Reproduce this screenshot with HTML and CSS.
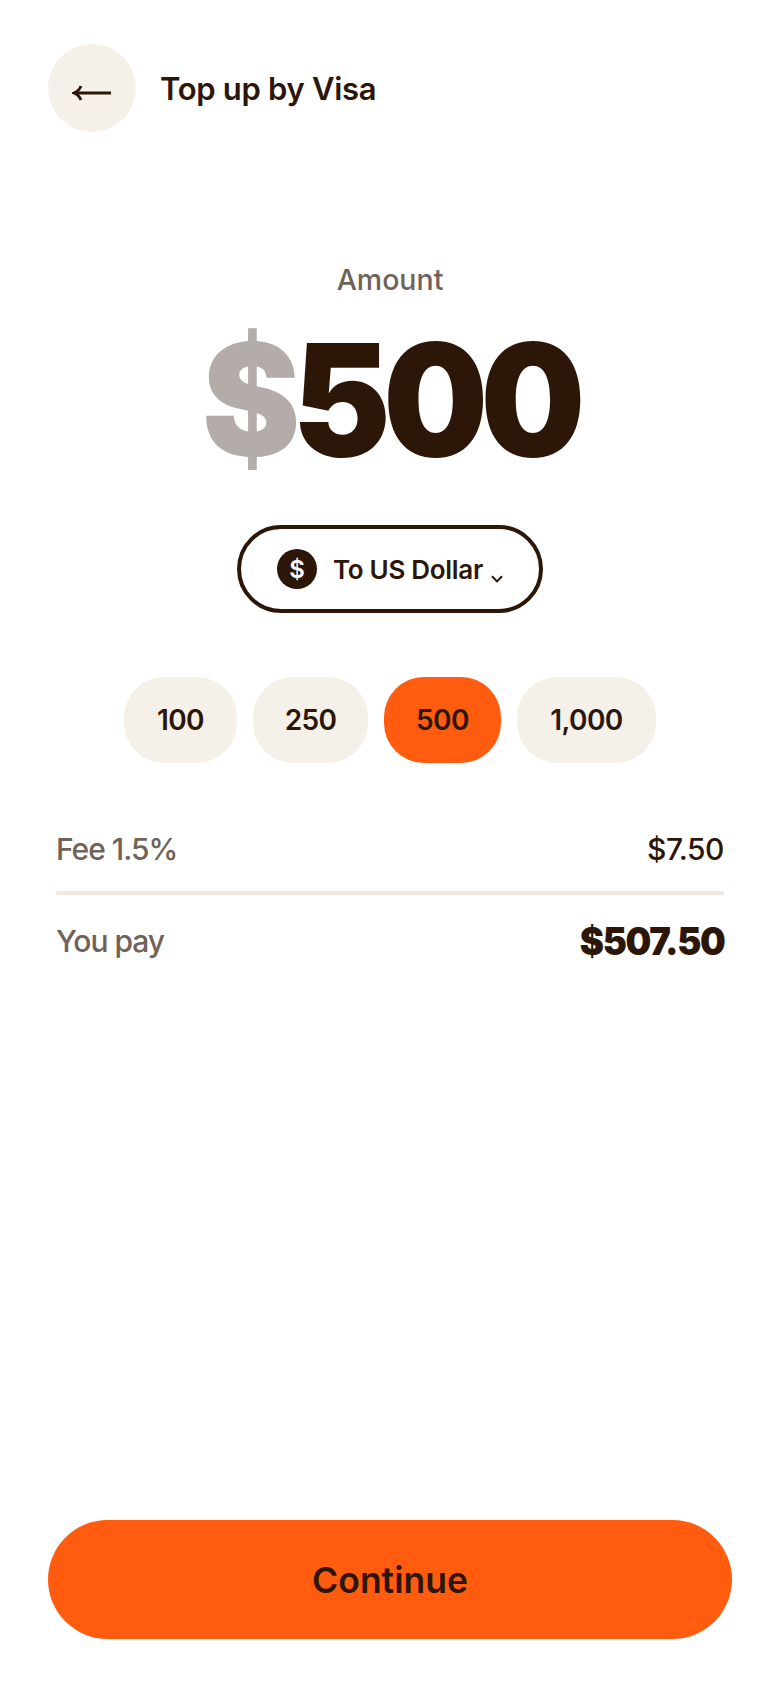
FILE: index.html
```html
<!DOCTYPE html>
<html>
    <head>
        <meta charset="utf-8">
        <title>Top up by Visa</title>
        <link rel="stylesheet" href="styles.css">
    </head>
    <body>
        <div class="screen">
            <div class="top-bar">
                <span class="back">
                    <svg width="40" height="18" viewBox="0 0 40 18" fill="none" stroke="#2c1608" stroke-width="2.8">
                        <path d="M2 9H39"/>
                        <path d="M9 2Q7 7 2 9Q7 11 9 16"/>
                    </svg>
                </span>
                <h1 class="title">Top up by Visa</h1>
            </div>

            <div class="amount">
                <div class="amount-label">Amount</div>
                <div class="amount-value"><span class="currency">$</span>500</div>
                <div class="currency-select">
                    <span class="coin">$</span>
                    <span class="currency-name">To US Dollar</span>
                    <svg class="caret" width="12" height="8" viewBox="0 0 12 8" fill="none" stroke="#2c1608" stroke-width="2">
                        <path d="M1 1.2L6 6.4L11 1.2"/>
                    </svg>
                </div>
            </div>

            <div class="chips">
                <span class="chip">100</span>
                <span class="chip">250</span>
                <span class="chip active">500</span>
                <span class="chip">1,000</span>
            </div>

            <div class="summary">
                <div class="row row-fee">
                    <span class="row-label">Fee 1.5%</span>
                    <span class="row-value">$7.50</span>
                </div>
                <div class="row">
                    <span class="row-label">You pay</span>
                    <span class="row-total">$507.50</span>
                </div>
            </div>

            <div class="continue">Continue</div>
        </div>
    </body>
</html>
```

FILE: styles.css
```css
*{
    box-sizing: border-box;
}
body{
    margin: 0;
    background: #fff;
    color: #2c1608;
    font-family: Inter, "Liberation Sans", sans-serif;
}
.screen{
    height: 1688px;
    padding: 44px 48px 49px;
    display: flex;
    flex-direction: column;
}

.top-bar{
    display: flex;
    align-items: center;
    gap: 24px;
}
.back{
    width: 88px;
    height: 88px;
    padding-top: 10px;
    border-radius: 50%;
    background: #f5f1e9;
    display: flex;
    align-items: center;
    justify-content: center;
}
.title{
    margin: 0;
    font-size: 31px;
    font-weight: 600;
    letter-spacing: -0.3px;
}

.amount{
    margin-top: 130px;
    display: flex;
    flex-direction: column;
    align-items: center;
}
.amount-label{
    font-size: 28.5px;
    line-height: 36px;
    font-weight: 500;
    color: #6f6259;
}
.amount-value{
    margin-top: 14px;
    font-size: 156px;
    line-height: 176px;
    font-weight: 900;
    letter-spacing: -8px;
    transform: scaleX(0.945);
}
.currency{
    color: #b3aca8;
}
.currency-select{
    margin-top: 37px;
    width: 306px;
    height: 88px;
    border: 4px solid #2c1608;
    border-radius: 44px;
    display: flex;
    align-items: center;
    justify-content: center;
    gap: 16px;
}
.coin{
    width: 40px;
    height: 40px;
    border-radius: 50%;
    background: #2c1608;
    color: #fff;
    font-size: 24px;
    font-weight: 600;
    display: flex;
    align-items: center;
    justify-content: center;
}
.currency-name{
    font-size: 26px;
    font-weight: 600;
    letter-spacing: -0.3px;
}
.caret{
    margin: 20px 0 0 -8px;
}

.chips{
    margin-top: 64px;
    display: grid;
    grid-template-columns: 113px 115px 117px 139px;
    justify-content: center;
    gap: 16px;
}
.chip{
    height: 86px;
    border-radius: 40px;
    background: #f5f1e9;
    font-size: 28px;
    font-weight: 600;
    letter-spacing: -0.6px;
    display: flex;
    align-items: center;
    justify-content: center;
}
.chip.active{
    background: #ff5c10;
}

.summary{
    margin: 44px 8px 0;
}
.row{
    display: flex;
    justify-content: space-between;
    align-items: center;
    height: 92px;
}
.row-fee{
    height: 88px;
    border-bottom: 4px solid #f1e9e1;
}
.row-label{
    font-size: 30px;
    font-weight: 500;
    color: #6f6259;
    letter-spacing: -1px;
}
.row-value{
    font-size: 30px;
    font-weight: 500;
    letter-spacing: -0.5px;
}
.row-total{
    font-size: 38px;
    font-weight: 900;
    letter-spacing: -1.4px;
    transform: scaleX(0.955);
    transform-origin: right center;
}

.continue{
    margin-top: auto;
    height: 119px;
    padding-top: 2px;
    border-radius: 60px;
    background: #ff5c10;
    font-size: 35.5px;
    font-weight: 600;
    display: flex;
    align-items: center;
    justify-content: center;
}
```
